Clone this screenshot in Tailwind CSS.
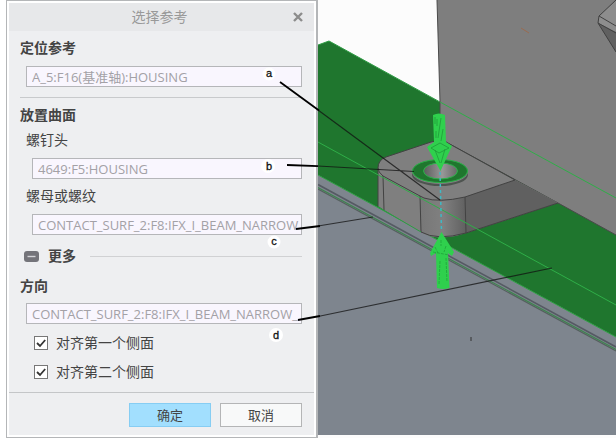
<!DOCTYPE html>
<html lang="zh-CN">
<head>
    <meta charset="UTF-8">
    <meta name="viewport" content="width=device-width, initial-scale=1.0">
    <title>选择参考</title>
    <script src="https://cdn.jsdelivr.net/npm/@tailwindcss/browser@4"></script>
</head>
<body class="bg-white font-['Open_Sans','Noto_Sans_CJK_SC',sans-serif] text-[#444]">
    <main class="relative flex min-h-screen overflow-hidden pl-[6px]">

        <!-- Dialog -->
        <form class="flex w-[312px] shrink-0 flex-col border border-r-2 border-[#b4b6b8] bg-[#eeeff1]">
            <div class="flex h-[30px] items-center border-2 border-b-0 border-white bg-[#e7e8ea] pr-2">
                <h1 class="flex-1 pl-5 text-center text-sm leading-5 text-[#999]">选择参考</h1>
                <button type="button" aria-label="关闭" class="flex size-4 items-center justify-center">
                    <svg class="size-[10px]" viewBox="0 0 10 10" stroke="#8c8c8c" stroke-width="2.400"><path d="M1 1L9 9M9 1L1 9"/></svg>
                </button>
            </div>

            <div class="flex flex-1 flex-col border-x-2 border-b-2 border-white">
                <div class="flex flex-col pt-[7px] pr-3 pl-[11px]">
                    <h2 class="text-sm leading-5 font-bold"><label for="axis">定位参考</label></h2>
                    <input id="axis" type="text" value="A_5:F16(基准轴):HOUSING" class="mt-2 ml-[6px] h-[21px] border border-[#b5b6b9] bg-[#f9f6fe] px-[5px] text-[13px] text-[#a3a1a6]">
                    <hr class="mt-[10px] border-[#c8cacc]">

                    <h2 class="mt-[7px] text-sm leading-5 font-bold">放置曲面</h2>
                    <label for="head" class="mt-[5px] ml-[6px] text-sm leading-5">螺钉头</label>
                    <input id="head" type="text" value="4649:F5:HOUSING" class="mt-2 ml-3 h-[21px] border border-[#b5b6b9] bg-[#f9f6fe] px-[5px] text-[13px] text-[#a3a1a6]">
                    <label for="nut" class="mt-[7px] ml-[6px] text-sm leading-5">螺母或螺纹</label>
                    <input id="nut" type="text" value="CONTACT_SURF_2:F8:IFX_I_BEAM_NARROW" class="mt-2 ml-3 h-[21px] border border-[#b5b6b9] bg-[#f9f6fe] pl-[5px] text-[13px] text-[#a3a1a6]">

                    <div class="mt-[11px] ml-1 flex items-center">
                        <button type="button" class="flex items-center gap-[9px] text-sm leading-5 font-bold">
                            <svg class="h-[11px] w-[15px]" viewBox="0 0 15 11"><rect width="15" height="11" rx="3" fill="#74747a"/><path d="M3.500 5.500H11.500" stroke="#d4d4d8" stroke-width="1.400"/></svg>
                            更多
                        </button>
                        <hr class="ml-[14px] flex-1 border-[#d0d1d3]">
                    </div>

                    <h2 class="mt-[10px] text-sm leading-5 font-bold"><label for="direction">方向</label></h2>
                    <input id="direction" type="text" value="CONTACT_SURF_2:F8:IFX_I_BEAM_NARROW_" class="mt-[7px] ml-[6px] h-[21px] border border-[#b5b6b9] bg-[#f9f6fe] pl-[5px] text-[13px] text-[#a3a1a6]">

                    <label class="mt-[9px] ml-[14px] flex items-center gap-2 text-sm leading-5">
                        <span class="grid">
                            <input type="checkbox" checked class="col-start-1 row-start-1 size-[14px] appearance-none border border-[#777] bg-white">
                            <svg class="pointer-events-none col-start-1 row-start-1 size-[14px]" viewBox="0 0 14 14" fill="none" stroke="#333" stroke-width="1.800"><path d="M3 7L6 10L11.200 4"/></svg>
                        </span>
                        对齐第一个侧面
                    </label>
                    <label class="mt-[9px] ml-[14px] flex items-center gap-2 text-sm leading-5">
                        <span class="grid">
                            <input type="checkbox" checked class="col-start-1 row-start-1 size-[14px] appearance-none border border-[#777] bg-white">
                            <svg class="pointer-events-none col-start-1 row-start-1 size-[14px]" viewBox="0 0 14 14" fill="none" stroke="#333" stroke-width="1.800"><path d="M3 7L6 10L11.200 4"/></svg>
                        </span>
                        对齐第二个侧面
                    </label>
                </div>

                <div class="mt-[10px] flex justify-end gap-[9px] border-t border-[#c4c6c8] pt-[10px] pr-3">
                    <button type="submit" class="h-6 w-[82px] border border-[#86cdf3] bg-[#a2dffe] text-[13px] leading-5">确定</button>
                    <button type="button" class="h-6 w-[82px] border border-[#b4b5b6] bg-[#f8f9f9] text-[13px] leading-5">取消</button>
                </div>
            </div>
        </form>

        <!-- 3D model view -->
        <div class="relative flex-1">
            <svg class="absolute inset-0 size-full" viewBox="318 0 298 438" preserveAspectRatio="xMinYMin slice">
                <defs>
                    <linearGradient id="corner">
                        <stop offset="0" stop-color="#777"/>
                        <stop offset=".5" stop-color="#808080"/>
                        <stop offset="1" stop-color="#606060"/>
                    </linearGradient>
                    <linearGradient id="hole">
                        <stop offset="0" stop-color="#5c5c5c"/>
                        <stop offset=".55" stop-color="#989898"/>
                        <stop offset="1" stop-color="#676767"/>
                    </linearGradient>
                </defs>
                <rect x="318" width="298" height="438" fill="#fcfcfc"/>

                <!-- beam -->
                <path d="M318 175L616 337V435H318Z" fill="#7e858e"/>
                <path d="M318 45L329 41L616 199V337L318 175Z" fill="#1f762e"/>
                <path d="M318 45L329 41L440 102M318 175L616 337" fill="none" stroke="#2d9c43"/>
                <path d="M318 184.500L616 347" stroke="#555a63" stroke-width="1.600"/>
                <path d="M318 189L616 351" stroke="#56605f" stroke-width="1.200"/>
                <path d="M318 187.500L616 349.500" stroke="#3f8350" stroke-width="1.200"/>

                <!-- wall -->
                <path d="M437 0H616V235L558 203L446 142L440 141V102Z" fill="#7e7e7e"/>
                <path d="M437 0L440 102V141L446 142L558 203L616 235" fill="none" stroke="#4a4a4a"/>
                <path d="M616 0L599 16L598 23L616 32Z" fill="#8d8d8d"/>
                <path d="M598 23L616 32V52Z" fill="#606060"/>
                <path d="M616 0L599 16L598 23L616 52M599 16L616 26M598 23L616 33" fill="none" stroke="#404040"/>
                <path d="M521 28L529 33" stroke="#9a6b50"/>

                <!-- bracket -->
                <path d="M378 168V206L384 210L421 232Q430 239 448 237Q458 236 466 233L558 203L515 180L446 142Q438 139 431 142L386 157Q378 160 378 168Z" fill="#7f7f7f"/>
                <path d="M465 197L515 180L558 203L466 233Z" fill="#606060"/>
                <path d="M420 196Q434 203 465 197L466 233Q437 242 421 232Z" fill="url(#corner)"/>
                <path d="M378 206V168Q378 160 386 157L431 142Q438 139 446 142L515 180L465 197Q439 203 424 198L420 196L383 176Q378 172 378 168M383 176L384 210M420 196L421 232Q437 241 466 233L558 203M465 197L466 233" fill="none" stroke="#424242"/>
                <path d="M378 207L421 232" stroke="#2d9c43"/>

                <path d="M412 172A28 12 0 0 0 468 172V175A28 11 0 0 1 412 175Z" fill="#4e5450"/>
                <ellipse cx="440" cy="171" rx="27.500" ry="11.500" fill="#1f762e" stroke="#2ab248"/>
                <ellipse cx="440.500" cy="171" rx="17" ry="8" fill="url(#hole)" stroke="#2ab248"/>

                <!-- construction lines -->
                <path d="M440 102L616 198M318 142L616 305" stroke="#2fae48"/>
                <path d="M440 172L441.500 232" stroke="#3fb9c4" stroke-width="1.500" stroke-dasharray="3 3"/>

                <!-- direction arrows -->
                <path d="M433 115Q439 112 445 115L446 142L452 146L440.500 171L427 147L434 142Z" fill="#2fd04d"/>
                <path d="M435 117V124M437 119V126M441 118L438 138M443 129L441 141M436 131V138M431 148L440 143L449 148L439 153ZM435 150L440 163M445 149L441 163" fill="none" stroke="#209a39" stroke-width=".8"/>
                <path d="M441.500 232L454 252L452 256L448 253L449.500 288Q443 290 437 288L436 253L431 256L430 253Z" fill="#2fd04d"/>
                <path d="M433 252L449 255M435 247L438 253M441 240V246M446 246L444 252M440 261L439 284M446 258L447 282" fill="none" stroke="#20a33a" stroke-width=".8" stroke-dasharray="3 1"/>

                <path d="M471 337V341" stroke="#333"/>
            </svg>
        </div>

        <!-- Callouts a-d -->
        <svg class="pointer-events-none absolute top-0 left-0 h-[438px] w-[616px]" viewBox="0 0 616 438" fill="none">
            <path d="M318 110L440 200M318 166L414 171.500M318 226L373 217M318 316.500L552 268" stroke="#111" stroke-opacity=".75" stroke-width="1.200"/>
            <path d="M280 82L319 110.500M287 165L318 166.200M296 229L320 226M298 320L320 316" stroke="#000" stroke-width="1.800"/>
            <g fill="#fff">
                <circle cx="269" cy="74" r="6.500"/>
                <circle cx="268" cy="166" r="7"/>
                <circle cx="274" cy="242" r="6.500"/>
                <circle cx="276" cy="335" r="7"/>
            </g>
            <g class="font-['Liberation_Sans',sans-serif] text-[11px]" fill="#111" stroke="#111" stroke-width=".3" text-anchor="middle">
                <text x="269" y="77">a</text>
                <text x="269" y="170">b</text>
                <text x="274" y="245">c</text>
                <text x="276" y="339">d</text>
            </g>
        </svg>
    </main>
</body>
</html>
